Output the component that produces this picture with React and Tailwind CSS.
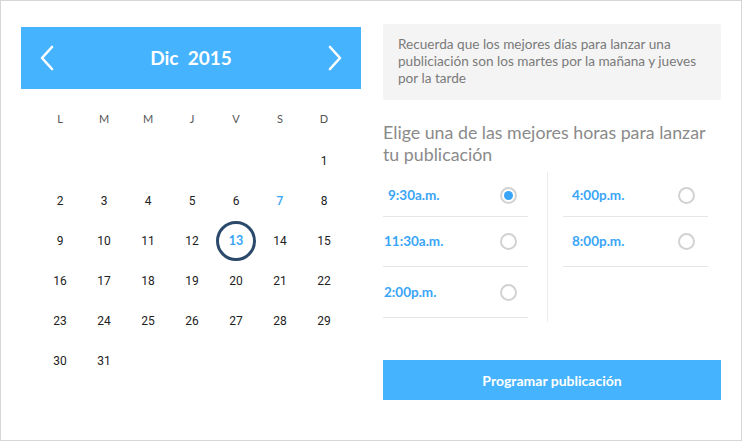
import { useState } from 'react'

const days = [
  [null, null, null, null, null, null, 1],
  [2, 3, 4, 5, 6, 7, 8],
  [9, 10, 11, 12, 13, 14, 15],
  [16, 17, 18, 19, 20, 21, 22],
  [23, 24, 25, 26, 27, 28, 29],
  [30, 31, null, null, null, null, null],
]

const Chevron = ({ dir }) => (
  <svg width="14" height="26" viewBox="0 0 14 26" fill="none">
    <path
      d={dir === 'left' ? 'M12 2 L2 13 L12 24' : 'M2 2 L12 13 L2 24'}
      stroke="white"
      strokeWidth="2.6"
      strokeLinecap="round"
      strokeLinejoin="round"
    />
  </svg>
)

function Radio({ checked }) {
  return (
    <span className="w-[17px] h-[17px] rounded-full border-2 border-[#d2d2d2] flex items-center justify-center">
      {checked && <span className="w-[9px] h-[9px] rounded-full bg-[#3aa5f7]" />}
    </span>
  )
}

function TimeRow({ label, h, checked, pl, pr, onClick }) {
  return (
    <div
      onClick={onClick}
      className={`flex items-center justify-between border-b border-[#e6e6e6] cursor-pointer ${h} ${pl} ${pr}`}
    >
      <span className="text-[13.5px] font-bold text-[#3aa5f7]">{label}</span>
      <Radio checked={checked} />
    </div>
  )
}

export default function App() {
  const [time, setTime] = useState('9:30')

  return (
    <div
      className="w-[742px] h-[441px] border border-[#d6d6d6] bg-white flex items-start pt-[23px] pl-[20px]"
      style={{ fontFamily: 'Lato, "Open Sans", sans-serif' }}
    >
      {/* calendar */}
      <div className="w-[340px] mt-[3px]">
        <div className="h-[62px] bg-[#45b3fe] flex items-center justify-between px-[19px]">
          <Chevron dir="left" />
          <span className="text-white text-[19px] font-bold whitespace-pre">Dic  2015</span>
          <Chevron dir="right" />
        </div>
        <div className="ml-[17px] w-[308px]">
          <div className="grid grid-cols-7 mt-[20px] h-[20px] items-center">
            {['L', 'M', 'M', 'J', 'V', 'S', 'D'].map((d, i) => (
              <span key={i} className="text-center text-[11px] text-[#555]">
                {d}
              </span>
            ))}
          </div>
          <div className="mt-[12px]">
            {days.map((row, r) => (
              <div key={r} className="grid grid-cols-7 h-[40px] items-center">
                {row.map((d, i) => (
                  <div key={i} className="flex justify-center">
                    {d === 13 ? (
                      <span className="w-[40px] h-[40px] rounded-full border-[3px] border-[#2b4a6b] flex items-center justify-center text-[12.5px] font-bold text-[#3aa5f7]">
                        13
                      </span>
                    ) : d ? (
                      <span
                        className={`text-[12px] ${d === 7 ? 'text-[#3aa5f7] font-medium' : 'text-[#222]'}`}
                        style={{ fontFamily: 'Roboto, sans-serif' }}
                      >
                        {d}
                      </span>
                    ) : null}
                  </div>
                ))}
              </div>
            ))}
          </div>
        </div>
      </div>

      {/* right side */}
      <div className="w-[338px] ml-[22px]">
        <div className="h-[76px] bg-[#f4f4f4] rounded-[2px] px-[15px] pt-[12px] text-[13.6px] leading-[17px] text-[#7a7a7a]">
          Recuerda que los mejores días para lanzar una publiciación son los martes por la mañana y jueves por la tarde
        </div>
        <h2 className="mt-[21px] text-[17.8px] leading-[22px] text-[#8a8a8a]">
          Elige una de las mejores horas para lanzar tu publicación
        </h2>
        <div className="mt-[7px] h-[150px] flex">
          <div className="w-[145px] pt-[2px]">
            <TimeRow label="9:30a.m." h="h-[43px]" pl="pl-[5px]" pr="pr-[11px]" checked={time === '9:30'} onClick={() => setTime('9:30')} />
            <TimeRow label="11:30a.m." h="h-[50px]" pl="pl-[1px]" pr="pr-[11px]" checked={time === '11:30'} onClick={() => setTime('11:30')} />
            <TimeRow label="2:00p.m." h="h-[51px]" pl="pl-[1px]" pr="pr-[11px]" checked={time === '2:00'} onClick={() => setTime('2:00')} />
          </div>
          <div className="w-px bg-[#ececec] ml-[19px]" />
          <div className="w-[145px] ml-[15px] pt-[2px]">
            <TimeRow label="4:00p.m." h="h-[43px]" pl="pl-[9px]" pr="pr-[13px]" checked={time === '4:00'} onClick={() => setTime('4:00')} />
            <TimeRow label="8:00p.m." h="h-[50px]" pl="pl-[9px]" pr="pr-[13px]" checked={time === '8:00'} onClick={() => setTime('8:00')} />
          </div>
        </div>
        <button className="mt-[38px] w-full h-[40px] bg-[#45b3fe] text-white text-[14px] font-bold">
          Programar publicación
        </button>
      </div>
    </div>
  )
}
